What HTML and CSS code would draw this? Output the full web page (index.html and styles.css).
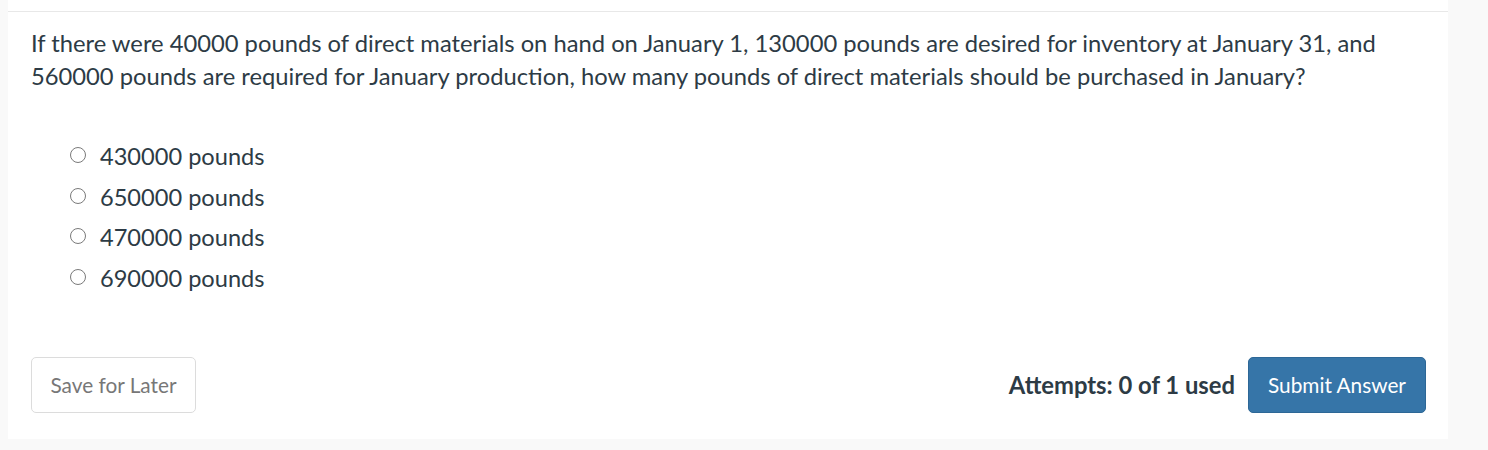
FILE: index.html
```html
<!DOCTYPE html>
<html>
<head>
<meta charset="utf-8">
<link rel="stylesheet" href="styles.css">
</head>
<body>
<div class="card">
  <div class="divider"></div>
  <div class="content">
    <p class="question">If there were 40000 pounds of direct materials on hand on January 1, 130000 pounds are desired for inventory at January 31, and 560000 pounds are required for January production, how many pounds of direct materials should be purchased in January?</p>
    <ul class="options">
      <li class="option"><span class="radio"></span><span class="label">430000 pounds</span></li>
      <li class="option"><span class="radio"></span><span class="label">650000 pounds</span></li>
      <li class="option"><span class="radio"></span><span class="label">470000 pounds</span></li>
      <li class="option"><span class="radio"></span><span class="label">690000 pounds</span></li>
    </ul>
    <div class="actions">
      <button class="btn btn-save">Save for Later</button>
      <div class="right">
        <span class="attempts">Attempts: 0 of 1 used</span>
        <button class="btn btn-submit">Submit Answer</button>
      </div>
    </div>
  </div>
</div>
</body>
</html>
```

FILE: styles.css
```css
html, body {
  margin: 0;
  padding: 0;
  background: #f9f9f9;
  font-family: Lato, "Open Sans", sans-serif;
  color: #2d3b45;
}
.card {
  margin-left: 8px;
  width: 1440px;
  height: 439px;
  background: #ffffff;
  padding-top: 11px;
  box-sizing: border-box;
}
.divider {
  height: 1px;
  background: #e8e8e8;
}
.content {
  padding: 0 22px 0 23px;
}
.question {
  margin: 15px 0 0 0;
  font-size: 23.75px;
  line-height: 33px;
}
.options {
  list-style: none;
  margin: 43px 0 0 0;
  padding: 0 0 0 39px;
}
.option {
  display: flex;
  align-items: center;
  height: 40.5px;
  font-size: 23.6px;
}
.radio {
  width: 16px;
  height: 16px;
  box-sizing: border-box;
  border: 1.3px solid #7a7a7a;
  border-radius: 50%;
  margin-right: 14px;
  margin-top: -2px;
  flex: none;
}
.actions {
  display: flex;
  justify-content: space-between;
  align-items: center;
  margin-top: 59px;
}
.right {
  display: flex;
  align-items: center;
  gap: 13px;
}
.btn {
  font-family: Lato, "Open Sans", sans-serif;
  font-size: 20.8px;
  height: 56px;
  border-radius: 5px;
  padding: 0 0 2px 0;
  cursor: pointer;
}
.btn-save {
  background: #ffffff;
  border: 1px solid #dcdcdc;
  color: #777777;
  width: 165px;
}
.btn-submit {
  background: #3675a8;
  border: 1px solid #2d6796;
  color: #ffffff;
  width: 178px;
}
.attempts {
  font-weight: bold;
  font-size: 23.8px;
  color: #2d3b45;
}
```
